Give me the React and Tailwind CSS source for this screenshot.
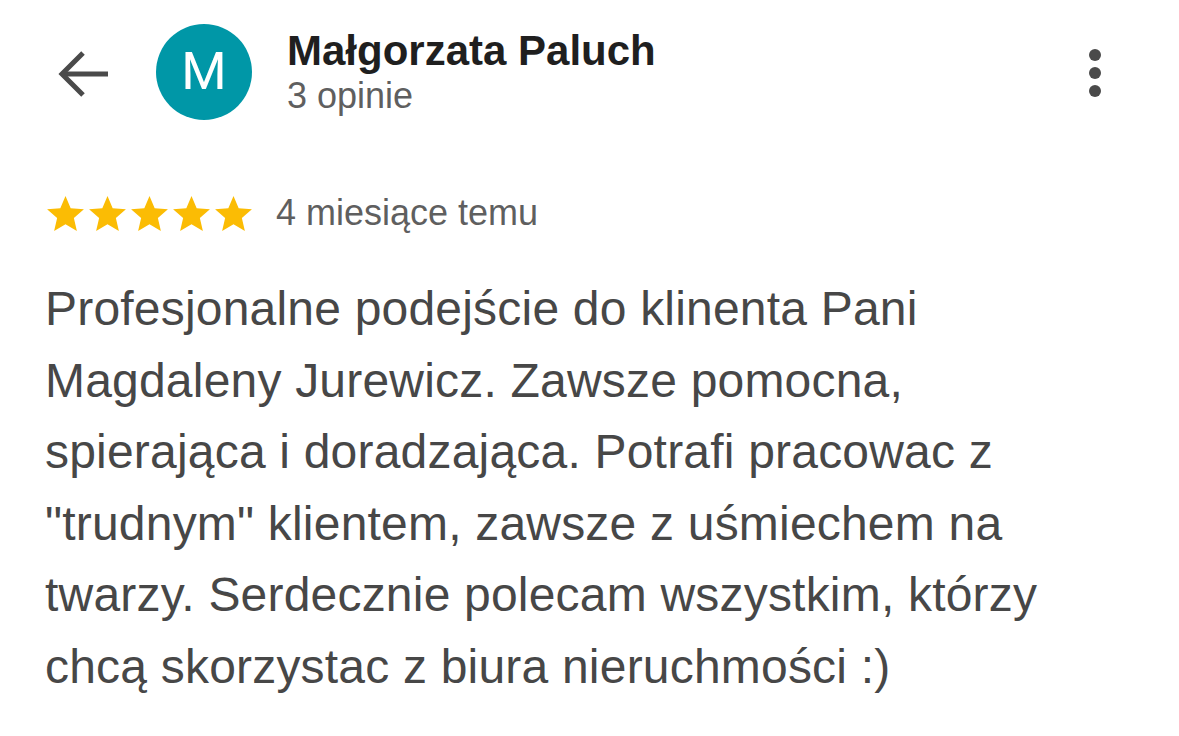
import React from "react";

function Star() {
  return (
    <svg width="37" height="35" viewBox="2 2 20 19" className="shrink-0">
      <path
        d="M12 17.27L18.18 21l-1.64-7.03L22 9.24l-7.19-.61L12 2 9.19 8.63 2 9.24l5.46 4.73L5.82 21z"
        fill="#fbbc04"
      />
    </svg>
  );
}

export default function App() {
  const lines = [
    "Profesjonalne podejście do klinenta Pani",
    "Magdaleny Jurewicz. Zawsze pomocna,",
    "spierająca i doradzająca. Potrafi pracowac z",
    "\"trudnym\" klientem, zawsze z uśmiechem na",
    "twarzy. Serdecznie polecam wszystkim, którzy",
    "chcą skorzystac z biura nieruchmości :)",
  ];
  return (
    <div
      className="w-[1179px] h-[736px] bg-white overflow-hidden"
      style={{ fontFamily: '"Liberation Sans", Arial, sans-serif' }}
    >
      <div className="flex items-start pt-[24px]">
        <div className="ml-[56px] mt-[22px] shrink-0">
          <svg width="56" height="56" viewBox="0 0 56 56" fill="none">
            <path d="M6 28H52" stroke="#4a4a4a" strokeWidth="5" />
            <path
              d="M27 7L6 28L27 49"
              stroke="#4a4a4a"
              strokeWidth="5"
              strokeLinejoin="miter"
            />
          </svg>
        </div>
        <div
          className="ml-[44px] w-[96px] h-[96px] rounded-full bg-[#0097a7] flex items-center justify-center text-white text-[52px] leading-none shrink-0"
          style={{ fontFamily: "Roboto, sans-serif" }}
        >
          M
        </div>
        <div className="ml-[35px] mt-[3px] flex flex-col">
          <div className="text-[42px] leading-[48px] font-bold text-[#1f1f1f]">
            Małgorzata Paluch
          </div>
          <div className="mt-[1px] text-[36px] leading-[40px] text-[#5f5f5f]">
            3 opinie
          </div>
        </div>
        <div className="ml-auto mr-[78px] mt-[25px] flex flex-col gap-[6px]">
          <div className="w-[12px] h-[12px] rounded-full bg-[#4a4a4a]" />
          <div className="w-[12px] h-[12px] rounded-full bg-[#4a4a4a]" />
          <div className="w-[12px] h-[12px] rounded-full bg-[#4a4a4a]" />
        </div>
      </div>

      <div className="flex items-center ml-[47px] mt-[73px] h-[40px]">
        <div className="flex gap-[5px]">
          <Star />
          <Star />
          <Star />
          <Star />
          <Star />
        </div>
        <div className="ml-[24px] text-[36px] leading-[40px] text-[#5f5f5f]">
          4 miesiące temu
        </div>
      </div>

      <div className="ml-[45px] mt-[40px] text-[48px] leading-[71.5px] tracking-[0.2px] text-[#474747]">
        {lines.map((l, i) => (
          <div key={i} className="whitespace-nowrap">
            {l}
          </div>
        ))}
      </div>
    </div>
  );
}
